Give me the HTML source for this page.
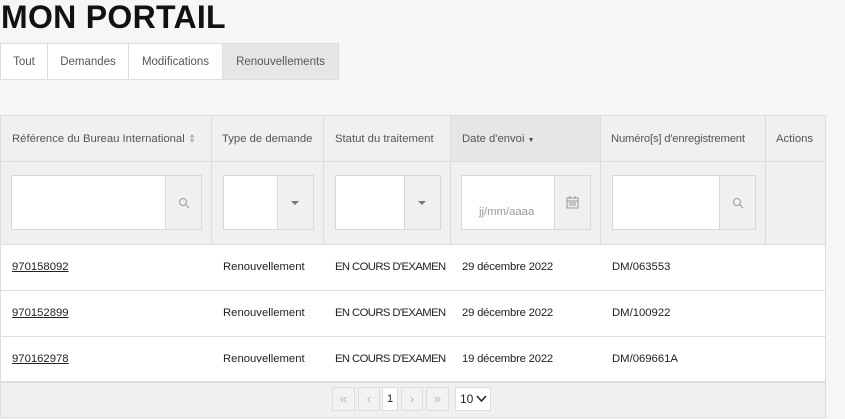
<!DOCTYPE html>
<html><head><meta charset="utf-8"><style>
*{box-sizing:border-box;margin:0;padding:0}
body{width:845px;height:419px;background:#f6f6f6;font-family:"Liberation Sans",sans-serif;position:relative;overflow:hidden;color:#333}
.a{position:absolute}
h1{position:absolute;left:1px;top:-1px;font-size:32px;font-weight:bold;color:#111;letter-spacing:0.3px}
.tab{position:absolute;top:43px;height:37px;border:1px solid #ddd;background:#fff;font-size:11.5px;color:#555;line-height:36px;text-align:center}
.th{font-size:11.3px;color:#555;line-height:46px;padding-left:11px;background:#f0f0f0;border-right:1px solid #ddd;border-bottom:1px solid #ddd;white-space:nowrap}
.fc{background:#f0f0f0;border-right:1px solid #ddd}
.inp{position:absolute;background:#fff;border:1px solid #d8d8d8}
.btn{position:absolute;background:#f0f0f0;border:1px solid #d8d8d8;border-left:none}
.cell{font-size:11.3px;color:#222;line-height:46px;white-space:nowrap}
.pg{position:absolute;top:387px;height:24px;border:1px solid #ddd;background:#f2f2f2;color:#bbb;font-size:11px;text-align:center;line-height:22px}
</style></head><body>
<h1>MON PORTAIL</h1>
<div class="tab" style="left:0;width:48px">Tout</div>
<div class="tab" style="left:47px;width:82px">Demandes</div>
<div class="tab" style="left:128px;width:95px">Modifications</div>
<div class="tab" style="left:222px;width:117px;background:#e6e6e6">Renouvellements</div>

<div class="a" style="left:0;top:115px;width:826px;height:303px;border:1px solid #ddd;background:#fff"></div>
<div class="a th" style="left:1px;top:116px;width:211px;height:46px">Référence du Bureau International <span style="color:#999;font-size:10px">⇕</span></div>
<div class="a th" style="left:212px;top:116px;width:112px;height:46px;padding-left:10px">Type de demande</div>
<div class="a th" style="left:324px;top:116px;width:127px;height:46px">Statut du traitement</div>
<div class="a th" style="left:451px;top:116px;width:150px;height:46px;background:#e6e6e6">Date d'envoi <span style="font-size:7px">▼</span></div>
<div class="a th" style="left:601px;top:116px;width:165px;height:46px;padding-left:10px;letter-spacing:-0.2px">Numéro[s] d'enregistrement</div>
<div class="a th" style="left:766px;top:116px;width:59px;height:46px;padding-left:10px;border-right:none">Actions</div>

<div class="a fc" style="left:1px;top:162px;width:211px;height:82px"></div>
<div class="a fc" style="left:212px;top:162px;width:112px;height:82px"></div>
<div class="a fc" style="left:324px;top:162px;width:127px;height:82px"></div>
<div class="a fc" style="left:451px;top:162px;width:150px;height:82px"></div>
<div class="a fc" style="left:601px;top:162px;width:165px;height:82px"></div>
<div class="a fc" style="left:766px;top:162px;width:59px;height:82px;border-right:none"></div>
<div class="a" style="left:1px;top:244px;width:824px;border-top:1px solid #ddd"></div>

<div class="inp" style="left:11px;top:175px;width:155px;height:55px"></div>
<div class="btn" style="left:166px;top:175px;width:36px;height:55px"><svg class="a" style="left:12px;top:21px" width="12" height="12"><circle cx="5" cy="5" r="3.5" fill="none" stroke="#999"/><path d="M7.5 7.5L11 11" stroke="#999"/></svg></div>
<div class="inp" style="left:223px;top:175px;width:55px;height:55px"></div>
<div class="btn" style="left:278px;top:175px;width:36px;height:55px"><div class="a" style="left:13px;top:25px;border:4px solid transparent;border-top:4px solid #777"></div></div>
<div class="inp" style="left:335px;top:175px;width:70px;height:55px"></div>
<div class="btn" style="left:405px;top:175px;width:36px;height:55px"><div class="a" style="left:13px;top:25px;border:4px solid transparent;border-top:4px solid #777"></div></div>
<div class="inp" style="left:461px;top:175px;width:94px;height:55px;font-size:11.3px;color:#999;padding:30px 0 0 17px">jj/mm/aaaa</div>
<div class="btn" style="left:555px;top:175px;width:36px;height:55px"><svg class="a" style="left:11px;top:20px" width="13" height="13"><rect x="1" y="2" width="11" height="10" fill="none" stroke="#999"/><path d="M1 5h11M4 0v3M9 0v3M3 7h7M3 9h7" stroke="#999"/></svg></div>
<div class="inp" style="left:612px;top:175px;width:108px;height:55px"></div>
<div class="btn" style="left:720px;top:175px;width:36px;height:55px"><svg class="a" style="left:12px;top:21px" width="12" height="12"><circle cx="5" cy="5" r="3.5" fill="none" stroke="#999"/><path d="M7.5 7.5L11 11" stroke="#999"/></svg></div>

<div class="a" style="left:1px;top:290px;width:824px;border-top:1px solid #ddd"></div>
<div class="a" style="left:1px;top:336px;width:824px;border-top:1px solid #ddd"></div>
<div class="a cell" style="left:12px;top:244px;text-decoration:underline">970158092</div>
<div class="a cell" style="left:223px;top:244px">Renouvellement</div>
<div class="a cell" style="left:335px;top:244px;letter-spacing:-0.6px">EN COURS D'EXAMEN</div>
<div class="a cell" style="left:462px;top:244px;letter-spacing:-0.2px">29 décembre 2022</div>
<div class="a cell" style="left:612px;top:244px">DM/063553</div>
<div class="a cell" style="left:12px;top:290px;text-decoration:underline">970152899</div>
<div class="a cell" style="left:223px;top:290px">Renouvellement</div>
<div class="a cell" style="left:335px;top:290px;letter-spacing:-0.6px">EN COURS D'EXAMEN</div>
<div class="a cell" style="left:462px;top:290px;letter-spacing:-0.2px">29 décembre 2022</div>
<div class="a cell" style="left:612px;top:290px">DM/100922</div>
<div class="a cell" style="left:12px;top:336px;text-decoration:underline">970162978</div>
<div class="a cell" style="left:223px;top:336px">Renouvellement</div>
<div class="a cell" style="left:335px;top:336px;letter-spacing:-0.6px">EN COURS D'EXAMEN</div>
<div class="a cell" style="left:462px;top:336px;letter-spacing:-0.2px">19 décembre 2022</div>
<div class="a cell" style="left:612px;top:336px">DM/069661A</div>

<div class="a" style="left:1px;top:381px;width:824px;height:36px;background:#f0f0f0;border-top:2px solid #ddd"></div>
<div class="pg" style="left:332px;width:23px;font-size:13px">«</div>
<div class="pg" style="left:358px;width:22px;font-size:13px">‹</div>
<div class="pg" style="left:382px;width:16px;background:#fff;color:#222">1</div>
<div class="pg" style="left:401px;width:22px;font-size:13px">›</div>
<div class="pg" style="left:426px;width:23px;font-size:13px">»</div>
<div class="pg" style="left:455px;width:36px;background:#fff;color:#222;font-size:12px;text-align:left;padding-left:4px">10<svg style="position:absolute;left:20px;top:7px" width="11" height="8"><path d="M1 1l4.5 5L10 1" fill="none" stroke="#222" stroke-width="1.5"/></svg></div>
</body></html>
